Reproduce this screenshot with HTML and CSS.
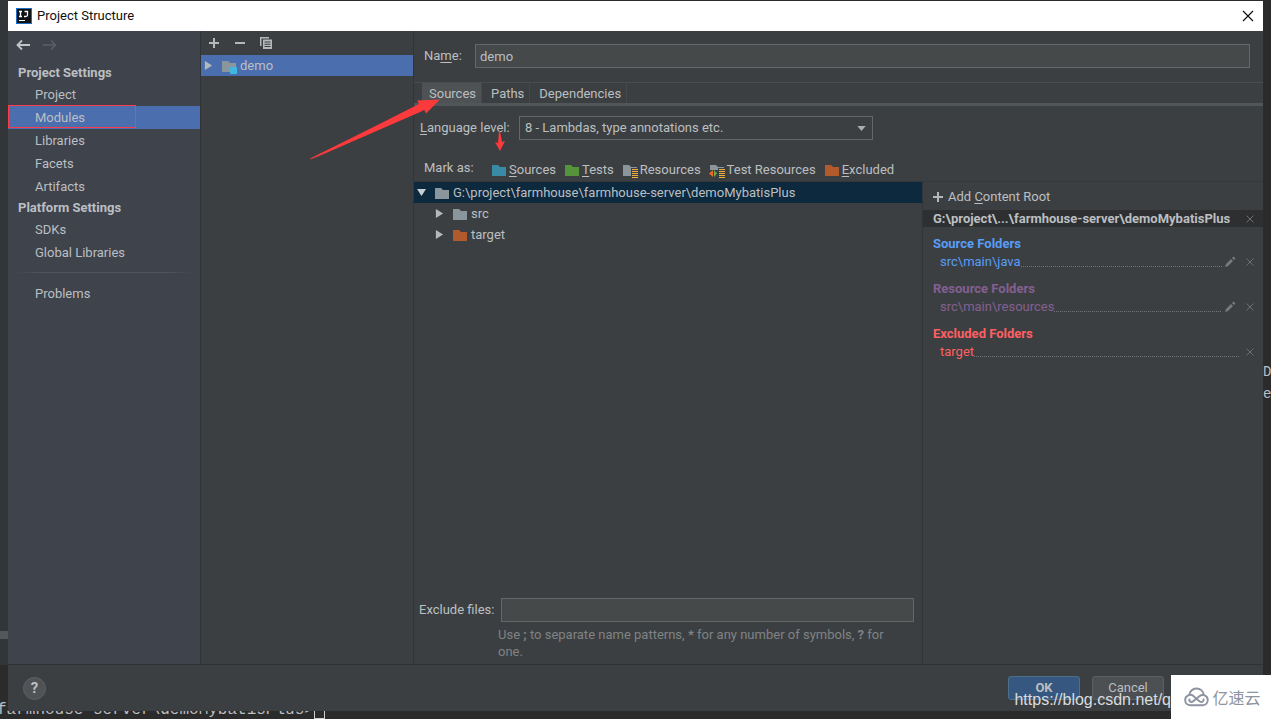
FILE: index.html
```html
<!DOCTYPE html>
<html lang="en">
<head>
<meta charset="utf-8">
<title>Project Structure</title>
<link rel="stylesheet" href="styles.css">
</head>
<body>
<svg class="defs" width="0" height="0" aria-hidden="true">
  <symbol id="folder" viewBox="0 0 16 16"><path fill="currentColor" d="M1 3h6l2 2h6v9H1z"/></symbol>
  <symbol id="lines" viewBox="0 0 16 16"><path fill="#3c3f41" d="M9 6h7v10H9z"/><path fill="#f0ae3c" d="M10 7h6v1h-6zM10 9h6v1h-6zM10 11h6v1h-6zM10 13h6v1h-6zM10 15h6v1h-6z"/></symbol>
  <symbol id="right" viewBox="0 0 10 10"><path fill="#b4b8bb" d="M1 0l8 5-8 5z"/></symbol>
  <symbol id="down" viewBox="0 0 10 10"><path fill="#c9ced1" d="M0 1h10L5 9z"/></symbol>
  <symbol id="cross" viewBox="0 0 10 10"><path fill="none" stroke="currentColor" d="M1.500 1.500l7 7M8.500 1.500l-7 7"/></symbol>
  <symbol id="pencil" viewBox="0 0 12 12"><path fill="currentColor" d="M1 11l1-3 5-5 2 2-5 5zM8 2l1.500-1.500 2 2L10 4z"/></symbol>
  <symbol id="plus" viewBox="0 0 12 12"><path fill="#b4b8bb" d="M5 1h2v4h4v2H7v4H5V7H1V5h4z"/></symbol>
</svg>
<div class="desktop">
  <div class="backdrop" aria-hidden="true">
    <span class="editor-edge">D<br>e</span>
    <span class="terminal">farmhouse-server\demoMybatisPlus&gt;<i class="caret"></i></span>
  </div>
  <div class="dialog">
    <header class="titlebar">
      <svg class="logo" viewBox="0 0 16 16"><path fill="#1c6fc0" d="M0 0h16v16H0z"/><path fill="#101214" d="M1 1h14v14H1z"/><path fill="none" stroke="#fff" stroke-width="1.300" d="M3 3.500h3M4.500 3.500v5M3 8.500h3M8.500 3.500h3v3.500q0 1.500-2 1.500H8"/><path fill="#fff" d="M3 12h6v1H3z"/></svg>
      <h1>Project Structure</h1>
      <button class="close" aria-label="Close"><svg viewBox="0 0 12 12"><path fill="none" stroke="#111" stroke-width="1.200" d="M1 1l10 10M11 1L1 11"/></svg></button>
    </header>
    <div class="main">
      <nav class="sidebar">
        <div class="history">
          <button aria-label="Back"><svg viewBox="0 0 14 12"><path fill="none" stroke="#c0c4c7" stroke-width="1.800" d="M14 6H1.500M6 1.500L1.500 6 6 10.500"/></svg></button>
          <button aria-label="Forward" disabled><svg viewBox="0 0 14 12"><path fill="none" stroke="#5b6067" stroke-width="1.500" d="M0 6h12.500M8 1.500L12.500 6 8 10.500"/></svg></button>
        </div>
        <h2>Project Settings</h2>
        <a href="#project">Project</a>
        <a href="#modules" class="current">Modules<span class="marker"></span></a>
        <a href="#libraries">Libraries</a>
        <a href="#facets">Facets</a>
        <a href="#artifacts">Artifacts</a>
        <h2>Platform Settings</h2>
        <a href="#sdks">SDKs</a>
        <a href="#global">Global Libraries</a>
        <hr>
        <a href="#problems">Problems</a>
      </nav>
      <section class="modules">
        <div class="tools">
          <button aria-label="Add"><svg viewBox="0 0 12 12"><use href="#plus"/></svg></button>
          <button aria-label="Remove"><svg viewBox="0 0 12 12"><path fill="#b4b8bb" d="M1 5h10v2H1z"/></svg></button>
          <button aria-label="Copy"><svg viewBox="0 0 12 12"><path fill="#b4b8bb" d="M0 0h9v1.500H1.500V9H0z"/><path fill="#b4b8bb" fill-rule="evenodd" d="M3 2.500h9V12H3zM4.500 4.500v1h6v-1zM4.500 6.800v1h6v-1zM4.500 9v1h6V9z"/></svg></button>
        </div>
        <div class="module">
          <svg class="twist" viewBox="0 0 10 10"><use href="#right"/></svg>
          <svg class="icon gray" viewBox="0 0 16 16"><use href="#folder"/><path fill="#40b6e0" d="M9 9h7v7H9z"/></svg>
          <span>demo</span>
        </div>
      </section>
      <section class="detail">
        <div class="name-row">
          <label for="name">Na<u>m</u>e:</label>
          <input id="name" type="text" value="demo">
        </div>
        <div class="tabs" role="tablist">
          <button role="tab" aria-selected="true">Sources</button>
          <button role="tab" aria-selected="false">Paths</button>
          <button role="tab" aria-selected="false">Dependencies</button>
        </div>
        <div class="level-row">
          <label for="level"><u>L</u>anguage level:</label>
          <div class="select">
            <select id="level"><option>8 - Lambdas, type annotations etc.</option></select>
            <svg viewBox="0 0 10 6"><path fill="#a9adb0" d="M0 0h10L5 6z"/></svg>
          </div>
        </div>
        <div class="content">
          <div class="mark-row">
            <span class="mark-label">Mark as:</span>
            <button><svg class="icon teal" viewBox="0 0 16 16"><use href="#folder"/></svg><span><u>S</u>ources</span></button>
            <button><svg class="icon green" viewBox="0 0 16 16"><use href="#folder"/></svg><span><u>T</u>ests</span></button>
            <button><svg class="icon gray" viewBox="0 0 16 16"><use href="#folder"/><use href="#lines"/></svg><span>Resources</span></button>
            <button><svg class="icon gray" viewBox="0 0 16 16"><use href="#folder"/><use href="#lines"/><path fill="#3c3f41" d="M0 8h9v8H0z"/><path fill="#f26522" d="M4 8v7L0 11.500z"/><path fill="#62b543" d="M5 8v7l3-3.500z"/></svg><span>Test Resources</span></button>
            <button><svg class="icon orange" viewBox="0 0 16 16"><use href="#folder"/></svg><span><u>E</u>xcluded</span></button>
          </div>
          <div class="tree-pane">
            <ul class="tree">
              <li class="root"><svg class="twist" viewBox="0 0 10 10"><use href="#down"/></svg><svg class="icon gray" viewBox="0 0 16 16"><use href="#folder"/></svg><span>G:\project\farmhouse\farmhouse-server\demoMybatisPlus</span></li>
              <li><svg class="twist" viewBox="0 0 10 10"><use href="#right"/></svg><svg class="icon gray" viewBox="0 0 16 16"><use href="#folder"/></svg><span>src</span></li>
              <li><svg class="twist" viewBox="0 0 10 10"><use href="#right"/></svg><svg class="icon orange" viewBox="0 0 16 16"><use href="#folder"/></svg><span>target</span></li>
            </ul>
            <div class="exclude">
              <label for="exclude">Exclude files:</label>
              <input id="exclude" type="text">
              <p>Use <b>;</b> to separate name patterns, <b>*</b> for any number of symbols, <b>?</b> for one.</p>
            </div>
          </div>
          <aside class="roots">
            <button class="add-root"><svg viewBox="0 0 12 12"><use href="#plus"/></svg><span>Add <u>C</u>ontent Root</span></button>
            <div class="root-path"><b>G:\project\...\farmhouse-server\demoMybatisPlus</b><button aria-label="Remove root"><svg class="cross" viewBox="0 0 10 10"><use href="#cross"/></svg></button></div>
            <div class="group source"><h3>Source Folders</h3><div class="path"><span>src\main\java</span><i></i><button aria-label="Edit"><svg class="pencil" viewBox="0 0 12 12"><use href="#pencil"/></svg></button><button aria-label="Remove"><svg class="cross" viewBox="0 0 10 10"><use href="#cross"/></svg></button></div></div>
            <div class="group resource"><h3>Resource Folders</h3><div class="path"><span>src\main\resources</span><i></i><button aria-label="Edit"><svg class="pencil" viewBox="0 0 12 12"><use href="#pencil"/></svg></button><button aria-label="Remove"><svg class="cross" viewBox="0 0 10 10"><use href="#cross"/></svg></button></div></div>
            <div class="group excluded"><h3>Excluded Folders</h3><div class="path"><span>target</span><i></i><button aria-label="Remove"><svg class="cross" viewBox="0 0 10 10"><use href="#cross"/></svg></button></div></div>
          </aside>
        </div>
      </section>
    </div>
    <footer class="actions">
      <button class="help" aria-label="Help">?</button>
      <button class="ok">OK</button>
      <button class="cancel">Cancel</button>
    </footer>
  </div>
  <svg class="arrows" width="450" height="170" viewBox="0 0 450 170" aria-hidden="true">
    <path fill="#fb3a3d" d="M310 160L420 112 424 109.500 426 113.500 440 99.500 417 100.500 419 104z"/>
    <path fill="#fb3a3d" d="M310 159.500l1-1.500 109-54 4 6z"/>
  </svg>
  <svg class="arrow-small" width="12" height="22" viewBox="0 0 12 22" aria-hidden="true"><path fill="#fb3a3d" d="M5 0h1l2 11 3-1-5 10-5-9 3 1z"/></svg>
  <span class="url">https://blog.csdn.net/q</span>
  <div class="brand">
    <svg viewBox="0 0 26 20"><g fill="none" stroke="#8d93a0" stroke-width="2"><path d="M5.500 8.500C5.500 4 9 1.200 13 1.200s7.500 2.800 7.500 7"/><path d="M13 12L9.500 8.700C7 6.700 1.200 8 1.200 13c0 3.500 2.600 5.500 5.500 5.500h13c3 0 5-2.300 5-5.300 0-5-5.700-6.500-8.700-4L9.500 14.500c-2.300 1.800-5-.5-3.500-2.700"/><path d="M13 12l3.500 2.700c2.500 1.600 4.800-1 3.500-3"/></g></svg>
    <span>亿速云</span>
  </div>
</div>
</body>
</html>
```
FILE: styles.css
```css
* { box-sizing: border-box; }
body { margin: 0; color: #bbbfc2; font: 13px/20px Roboto, "Noto Sans CJK SC", sans-serif; background: #2b2b2b; }
button { margin: 0; padding: 0; border: 0; background: none; color: inherit; font: inherit; display: flex; align-items: center; }
h1, h2, h3, p, ul { margin: 0; padding: 0; }
ul { list-style: none; }
svg { display: block; flex: none; }
u { text-underline-offset: 2px; }
.defs { position: absolute; }
.desktop { position: relative; height: 100vh; min-height: 500px; padding: 1px 8px 8px; display: flex; overflow: hidden; }
.backdrop { position: absolute; inset: 0; background: linear-gradient(#55585a, #55585a) 0 631px / 8px 8px no-repeat, linear-gradient(#333638, #333638) 0 0 / 8px 665px no-repeat, #2b2b2b; }
.editor-edge { position: absolute; right: 0; top: 361px; width: 8px; overflow: hidden; font: 14px/22px "Liberation Mono", monospace; }
.terminal { position: absolute; left: -3px; bottom: 0; display: flex; font: 16px/18px "Liberation Mono", monospace; white-space: pre; }
.caret { width: 11px; height: 18px; border: 1px solid #d0d0d0; }
.dialog { position: relative; flex: 1; min-width: 0; display: flex; flex-direction: column; background: #3c3f41; }
.titlebar { flex: none; height: 30px; padding: 0 9px 0 8px; display: flex; align-items: center; gap: 5px; background: #fff; color: #111; }
.titlebar h1 { flex: 1; font-size: 13px; font-weight: 400; }
.logo { width: 16px; height: 16px; }
.close svg { width: 12px; height: 12px; }
.main { flex: 1; min-height: 0; display: flex; border-bottom: 1px solid #2f3234; }
.sidebar { width: 193px; flex: none; border-right: 1px solid #313437; background: #3f434c; }
.history { height: 28px; margin-bottom: 4px; padding-left: 8px; display: flex; gap: 13px; }
.history svg { width: 14px; height: 12px; }
.sidebar h2 { padding-left: 10px; font-size: 13px; line-height: 20px; }
.sidebar a { position: relative; display: block; padding-left: 27px; line-height: 23px; color: inherit; text-decoration: none; }
.sidebar .current { background: #4b6eaf; }
.marker { position: absolute; left: 0; top: -1px; width: 128px; height: 23px; border: 1px solid #ff3b4a; }
.sidebar hr { height: 1px; margin: 8px 8px 9px; border: 0; background: linear-gradient(90deg, #3f434c, #50545b 15%, #50545b 85%, #3f434c); }
.modules { width: 213px; flex: none; border-right: 1px solid #323537; }
.tools { height: 24px; padding-left: 7px; display: flex; gap: 14px; }
.tools svg { width: 12px; height: 12px; }
.module { height: 21px; padding-left: 3px; display: flex; align-items: center; background: #4b6eaf; }
.twist { width: 9px; height: 9px; }
.icon { width: 16px; height: 16px; }
.module .icon { margin: 0 3px 0 8px; }
.gray { color: #8b959c; }
.teal { color: #3a8aa5; }
.green { color: #55943a; }
.orange { color: #b35a2d; }
.detail { flex: 1; min-width: 0; display: flex; flex-direction: column; }
.name-row { height: 51px; padding: 0 13px 1px 10px; display: flex; align-items: center; }
.name-row label { width: 51px; }
input { min-width: 0; height: 24px; padding: 0 4px; border: 1px solid #646667; border-radius: 0; background: #45494a; color: inherit; font: inherit; }
.name-row input { flex: 1; }
.tabs { height: 24px; padding-left: 8px; display: flex; border-top: 1px solid #4a4d4f; border-bottom: 3px solid #515658; }
.tabs button { padding: 2px 5px 0 9px; border-right: 1px solid #46494b; }
.tabs [aria-selected="true"] { padding-left: 7px; background: #4e5254; }
.level-row { height: 45px; padding: 0 0 1px 6px; display: flex; align-items: center; }
.level-row label { width: 99px; }
.select { position: relative; width: 354px; }
.select select { width: 100%; height: 24px; padding: 0 5px; appearance: none; border: 1px solid #646667; border-radius: 0; background: #3c3f41; color: inherit; font: inherit; }
.select svg { position: absolute; right: 7px; top: 10px; width: 9px; height: 5px; pointer-events: none; }
.content { flex: 1; min-height: 0; display: grid; grid-template: 31px 1fr / 509px 1fr; }
.mark-row { grid-column: 1 / -1; padding: 3px 0 0 10px; display: flex; align-items: center; gap: 8px; border-bottom: 1px solid #35383a; }
.mark-label { width: 59px; }
.mark-row button { gap: 2px; padding-top: 4px; }
.tree-pane { display: flex; flex-direction: column; border-right: 1px solid #323537; }
.tree { flex: 1; }
.tree li { height: 21px; padding-left: 21px; display: flex; align-items: center; }
.tree .root { padding-left: 3px; background: #0d293e; }
.tree .icon { margin: 0 3px 0 8px; }
.exclude { padding: 0 8px 4px 5px; display: grid; grid-template-columns: 82px 1fr; align-items: center; }
.exclude p { grid-column: 2; margin: 4px 0 0 -3px; padding-right: 12px; color: #7f8385; line-height: 17px; }
.roots { min-width: 0; }
.add-root { height: 28px; padding: 1px 0 0 9px; gap: 4px; }
.add-root svg, .pencil { width: 12px; height: 12px; }
.cross { width: 10px; height: 10px; }
.root-path { height: 17px; padding: 0 8px 0 10px; display: flex; align-items: center; justify-content: space-between; background: #2d2f31; white-space: nowrap; }
.root-path button, .path button { color: #6b6f71; }
.group { padding: 8px 8px 2px 10px; }
.group h3 { font-size: 13px; line-height: 18px; }
.path { height: 17px; padding-left: 7px; display: flex; align-items: center; line-height: 17px; }
.path i { flex: 1; height: 1px; margin-top: 10px; background: repeating-linear-gradient(90deg, #72767a 0 1px, transparent 1px 2px); }
.path .pencil { margin: 0 9px 0 2px; color: #777b7d; }
.excluded .cross { margin-left: 5px; }
.source { color: #589df6; }
.resource { color: #835f92; }
.excluded { color: #ff5f62; }
.actions { height: 46px; flex: none; padding: 0 99px 0 15px; display: flex; align-items: center; gap: 12px; }
.actions button { justify-content: center; }
.help { width: 23px; height: 23px; margin-right: auto; border-radius: 50%; border: 1px solid #5e6163; background: #4f5355; font-size: 15px; font-weight: 700; }
.ok, .cancel { width: 72px; height: 24px; border: 1px solid #5e6060; border-radius: 3px; background: #4c5052; }
.ok { border-color: #4c708c; background: #365880; font-weight: 700; }
.arrows { position: absolute; left: 0; top: 0; pointer-events: none; }
.arrow-small { position: absolute; left: 494px; top: 131px; pointer-events: none; }
.url { position: absolute; right: 100px; bottom: 9px; color: #d9dcde; font: 16px/20px "Liberation Sans", Arial, sans-serif; }
.brand { position: absolute; right: 0; bottom: 0; width: 100px; height: 44px; padding-left: 3px; display: flex; align-items: center; justify-content: center; gap: 3px; background: #fff; color: #8d93a0; font: 16px/20px "Noto Sans CJK SC", sans-serif; }
.brand svg { width: 25px; height: 20px; }
```
